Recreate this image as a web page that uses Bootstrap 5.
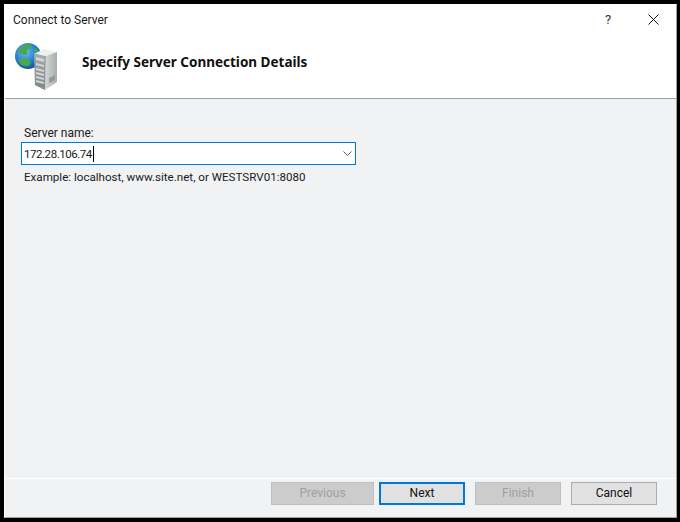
<!DOCTYPE html>
<html lang="en">
<head>
    <meta charset="UTF-8">
    <meta name="viewport" content="width=device-width, initial-scale=1.0">
    <title>Connect to Server</title>
    <link href="https://cdn.jsdelivr.net/npm/bootstrap@5.3.0/dist/css/bootstrap.min.css" rel="stylesheet">
    <style>
        html, body { height: 100%; }
        body {
            background: #000;
            padding: 4px 3px 4px 4px;
            font-family: "Roboto", "Noto Sans", sans-serif;
            font-size: 12px;
            line-height: 16px;
            color: #1a1a1a;
        }
        .dlg-window { height: 100%; background: #f1f2f4; border: 1px solid #a0a0a0; border-top-color: #fff; border-left-color: #fff; }
        .dlg-head { height: 94px; background: #fff; border-bottom: 1px solid #a0a0a0; }
        .dlg-title { height: 38px; padding: 7px 0 0 8px; }
        .dlg-help { width: 14px; margin-right: 33px; font-size: 13px; color: #333; }
        .dlg-close { margin-right: 17px; margin-top: 2px; display: block; }
        .dlg-banner { padding-left: 10px; }
        .dlg-heading { margin: 0 0 0 23px; font-family: "Noto Sans", sans-serif; font-size: 13.5px; font-weight: 700; line-height: 18px; padding-bottom: 11px; color: #111; }
        .dlg-body { padding: 26px 0 0 16px; }
        .dlg-label { margin: 0 0 0 3px; display: block; height: 16px; }
        .dlg-combo { width: 335px; height: 23px; margin-top: 1px; background: #fff; border: 1px solid #0078d7; padding: 0 3px 0 2px; }
        .dlg-input { border: 0; outline: 0; padding: 0; width: 69px; font: inherit; font-size: 11.5px; letter-spacing: -.45px; color: inherit; background: transparent; }
        .dlg-caret { width: 1px; height: 16px; background: #000; }
        .dlg-hint { margin: 4px 0 0 3px; font-size: 11.6px; }
        .dlg-foot { height: 39px; border-top: 1px solid #fff; padding: 3px 19px 0 0; gap: 10px; }
        .dlg-btn {
            height: 23px; padding: 0; border-radius: 0; font-size: 12px; line-height: 19px;
            background: #e1e1e1; border: 1px solid #adadad; color: #111;
        }
        .dlg-btn:disabled { background: #ccc; border-color: #bfbfbf; color: #a0a0a0; opacity: 1; }
        .dlg-btn.dlg-default { border: 2px solid #0078d7; margin-left: -5px; }
        .dlg-w103 { width: 103px; }
        .dlg-w86 { width: 86px; }
    </style>
</head>
<body>
    <div class="dlg-window d-flex flex-column">
        <div class="dlg-head">
            <div class="dlg-title d-flex align-items-start">
                <span class="flex-grow-1">Connect to Server</span>
                <span class="dlg-help text-center">?</span>
                <svg class="dlg-close" width="11" height="11" viewBox="0 0 11 11"><path d="M.5.5l10 10M10.5.5l-10 10" stroke="#111" stroke-width="1" fill="none"/></svg>
            </div>
            <div class="dlg-banner d-flex align-items-center">
                <svg width="44" height="48" viewBox="0 0 44 48">
                    <defs>
                        <radialGradient id="sea" cx=".4" cy=".35" r=".75"><stop offset="0" stop-color="#6cc0ee"/><stop offset=".6" stop-color="#1e78cc"/><stop offset="1" stop-color="#123f8c"/></radialGradient>
                        <linearGradient id="sideface" x1="0" x2="1" y1="0" y2="0"><stop offset="0" stop-color="#d6d8d8"/><stop offset="1" stop-color="#a8acac"/></linearGradient>
                        <linearGradient id="front" x1="0" x2="0" y1="0" y2="1"><stop offset="0" stop-color="#a6abab"/><stop offset="1" stop-color="#7f8585"/></linearGradient>
                    </defs>
                    <circle cx="13" cy="13" r="13" fill="url(#sea)"/>
                    <path d="M4 6c3-3 7-5 11-4 3 1 2 2 0 3-3 1-4 3-3 5 1 2-3 3-5 1-2-1-4-2-3-5zM3 17c3-2 8-2 11 0 3 2 2 5-1 6-4 1-8-1-10-6zM19 6c2-1 4 0 5 3l-4 1z" fill="#4aa846"/>
                    <path d="M19 11l10-5 13 3-11 4z" fill="#eef0f0"/>
                    <path d="M31 13l11-4v30l-12 8z" fill="url(#sideface)"/>
                    <path d="M19 11l12 2-1 34-10-5z" fill="url(#front)"/>
                    <path d="M21 14l8 2v3l-8-2zM21 20l8 2v2l-8-2zM21 25l8 2v2l-8-2zM21 29l8 2v2l-8-2zM21 33l8 2v2l-8-2zM21 37l8 2v2l-8-2z" fill="#d4d7d7"/>
                    <circle cx="27" cy="45" r="1" fill="#6fd24a"/>
                    <path d="M34 35l6-3v5l-6 3z" fill="#94989a"/>
                </svg>
                <h1 class="dlg-heading">Specify Server Connection Details</h1>
            </div>
        </div>
        <div class="dlg-body flex-grow-1">
            <label class="dlg-label" for="server">Server name:</label>
            <div class="dlg-combo d-flex align-items-center">
                <input class="dlg-input" id="server" value="172.28.106.74">
                <span class="dlg-caret"></span>
                <svg class="ms-auto" width="9" height="5" viewBox="0 0 9 5"><path d="M.5.5l4 4 4-4" stroke="#555" fill="none"/></svg>
            </div>
            <p class="dlg-hint">Example: localhost, www.site.net, or WESTSRV01:8080</p>
        </div>
        <div class="dlg-foot d-flex justify-content-end">
            <button class="btn dlg-btn dlg-w103" disabled>Previous</button>
            <button class="btn dlg-btn dlg-default dlg-w86">Next</button>
            <button class="btn dlg-btn dlg-w86" disabled>Finish</button>
            <button class="btn dlg-btn dlg-w86">Cancel</button>
        </div>
    </div>
    <script src="https://cdn.jsdelivr.net/npm/bootstrap@5.3.0/dist/js/bootstrap.bundle.min.js"></script>
</body>
</html>
